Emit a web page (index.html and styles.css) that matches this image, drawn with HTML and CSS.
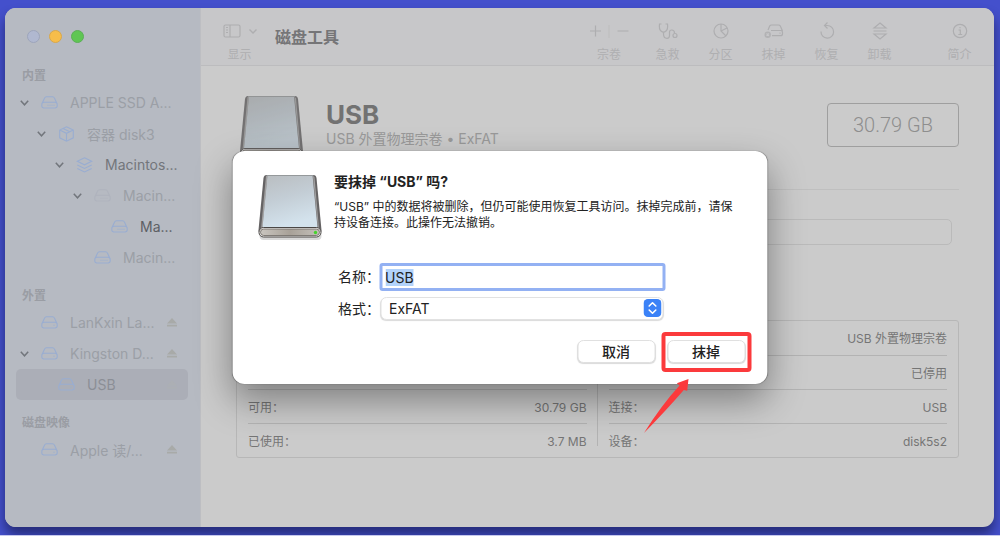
FILE: index.html
```
<!DOCTYPE html>
<html lang="zh-CN">
<head>
<meta charset="utf-8">
<meta name="viewport" content="width=device-width, initial-scale=1">
<title>磁盘工具</title>
<link rel="stylesheet" href="styles.css">
</head>
<body>
<svg class="defs" aria-hidden="true">
  <defs>
    <linearGradient id="metal" x1="0" y1="0" x2="0.3" y2="1">
      <stop offset="0" stop-color="#b9bdc0"/><stop offset="0.5" stop-color="#c3cdd5"/><stop offset="1" stop-color="#d3e2ec"/>
    </linearGradient>
    <linearGradient id="front" x1="0" y1="0" x2="1" y2="0">
      <stop offset="0" stop-color="#c9c5bf"/><stop offset="0.5" stop-color="#a8a198"/><stop offset="1" stop-color="#c4c0ba"/>
    </linearGradient>
    <symbol id="usb-drive" viewBox="0 0 66 68">
      <rect x="2" y="59" width="62" height="8" rx="4" fill="#000" opacity="0.15"/>
      <path d="M9 2H56Q58.500 2 59 5L64 57Q64 61 60 61H5Q1 61 1 57L6 5Q6.500 2 9 2Z" fill="#656364"/>
      <path d="M8.500 3L3.500 56H5L10 3Z" fill="#a09f9f"/>
      <path d="M55.500 3L60.500 56H61.500L57 4Z" fill="#a09f9f"/>
      <path d="M10 2H55L60 54.500H5Z" fill="url(#metal)"/>
      <path d="M9 2.500H56" stroke="#95999b" stroke-width="1"/>
      <rect x="1.500" y="54.500" width="62" height="9.500" rx="4.500" fill="#f2f1ef" stroke="#4a4745"/>
      <rect x="3" y="56" width="59" height="6.500" rx="3.200" fill="url(#front)" stroke="#6a655f" stroke-width="0.800"/>
      <circle cx="58" cy="59.500" r="1.700" fill="#45d42c"/>
    </symbol>
    <symbol id="disk" viewBox="0 0 17 13">
      <path d="M1 7.500L3.600 2Q4.100 0.800 5.400 0.800H11.600Q12.900 0.800 13.400 2L16 7.500M3 6.300H14Q16.200 6.300 16.200 8.500V9.800Q16.200 12 14 12H3Q0.800 12 0.800 9.800V8.500Q0.800 6.300 3 6.300Z"/>
      <path d="M12.500 9.200H13.500"/>
    </symbol>
    <symbol id="disk-internal" viewBox="0 0 17 13">
      <path d="M1 7.500L3.600 2Q4.100 0.800 5.400 0.800H11.600Q12.900 0.800 13.400 2L16 7.500M3 6.300H14Q16.200 6.300 16.200 8.500V9.800Q16.200 12 14 12H3Q0.800 12 0.800 9.800V8.500Q0.800 6.300 3 6.300Z"/>
      <path d="M6.500 9.200H14" stroke-dasharray="1 1"/>
    </symbol>
    <symbol id="box" viewBox="0 0 17 16">
      <path d="M8.500 0.800L15.300 4V11.800L8.500 15.200L1.700 11.800V4ZM1.700 4L8.500 7.300L15.300 4M8.500 7.300V15M5 2.500L11.800 5.700"/>
    </symbol>
    <symbol id="layers" viewBox="0 0 17 16">
      <path d="M8.500 0.800L15.700 4.300L8.500 7.800L1.300 4.300ZM1.300 8L8.500 11.500L15.700 8M1.300 11.500L8.500 15L15.700 11.500"/>
    </symbol>
    <symbol id="chevron" viewBox="0 0 9 6"><path d="M0.800 0.800L4.500 4.800L8.200 0.800"/></symbol>
    <symbol id="eject" viewBox="0 0 10 9"><path d="M5 0L10 5.500H0ZM0 6.800H10V8.600H0Z"/></symbol>
  </defs>
</svg>

<main class="window">
  <aside class="sidebar">
    <div class="lights">
      <button class="light" type="button" aria-label="关闭"></button>
      <button class="light light-amber" type="button" aria-label="最小化"></button>
      <button class="light light-green" type="button" aria-label="缩放"></button>
    </div>
    <nav>
      <h2 class="group">内置</h2>
      <ul class="tree">
        <li class="node"><svg class="chev"><use href="#chevron"/></svg><svg class="glyph"><use href="#disk-internal"/></svg><span>APPLE SSD A...</span></li>
        <li class="node level-1"><svg class="chev"><use href="#chevron"/></svg><svg class="glyph glyph-tall"><use href="#box"/></svg><span>容器 disk3</span></li>
        <li class="node level-2 strong"><svg class="chev"><use href="#chevron"/></svg><svg class="glyph glyph-tall"><use href="#layers"/></svg><span>Macintos...</span></li>
        <li class="node level-3"><svg class="chev"><use href="#chevron"/></svg><svg class="glyph glyph-faint"><use href="#disk-internal"/></svg><span>Macin...</span></li>
        <li class="node level-4 stronger"><span class="chev"></span><svg class="glyph"><use href="#disk-internal"/></svg><span>Ma...</span></li>
        <li class="node level-3"><span class="chev"></span><svg class="glyph"><use href="#disk-internal"/></svg><span>Macin...</span></li>
      </ul>
      <h2 class="group">外置</h2>
      <ul class="tree">
        <li class="node"><span class="chev"></span><svg class="glyph"><use href="#disk"/></svg><span>LanKxin La...</span><svg class="eject"><use href="#eject"/></svg></li>
        <li class="node"><svg class="chev"><use href="#chevron"/></svg><svg class="glyph"><use href="#disk"/></svg><span>Kingston D...</span><svg class="eject"><use href="#eject"/></svg></li>
        <li class="node level-1 selected"><span class="chev"></span><svg class="glyph"><use href="#disk"/></svg><span>USB</span><svg class="eject eject-faint"><use href="#eject"/></svg></li>
      </ul>
      <h2 class="group">磁盘映像</h2>
      <ul class="tree">
        <li class="node"><span class="chev"></span><svg class="glyph"><use href="#disk"/></svg><span>Apple 读/...</span><svg class="eject"><use href="#eject"/></svg></li>
      </ul>
    </nav>
  </aside>

  <section class="pane">
    <header class="toolbar">
      <button class="tool tool-view" type="button">
        <svg width="34" height="20" viewBox="0 0 34 20"><rect x="1" y="4" width="16" height="12" rx="1.500"/><path d="M7 4V16M3 6.500H5M3 9H5M3 11.500H5"/><path d="M26.500 8.500L30 12L33.500 8.500" stroke-width="1.400"/></svg>
        <span>显示</span>
      </button>
      <h1 class="title">磁盘工具</h1>
      <button class="tool tool-wide" type="button">
        <svg width="40" height="20" viewBox="0 0 40 20"><path d="M1 10H12M6.500 4.500V15.500M28.500 10H39.500"/><path d="M20 4V17" stroke-width="0.800" opacity="0.500"/></svg>
        <span>宗卷</span>
      </button>
      <button class="tool" type="button">
        <svg width="20" height="20" viewBox="0 0 20 20"><path d="M3.500 3H1.500Q0.800 8 3 10Q5.500 12.500 8 10Q10.200 8 9.500 3H7.500M5.500 11.500V13Q5.500 17.300 9 17.300Q11.500 17.300 11.500 14.500V11Q11.500 9 13.700 9Q16.500 9 16.500 12"/><circle cx="17" cy="14.500" r="2"/></svg>
        <span>急救</span>
      </button>
      <button class="tool" type="button">
        <svg width="20" height="20" viewBox="0 0 20 20"><circle cx="10" cy="10" r="7"/><path d="M10 3V10L15 15M10 10L16 7"/></svg>
        <span>分区</span>
      </button>
      <button class="tool" type="button">
        <svg width="20" height="20" viewBox="0 0 20 20"><path d="M4 9L5.700 5Q6.200 4 7.500 4H14.500Q15.800 4 16.300 5L18.500 10M7 9.500H16.500Q18.500 9.500 18.500 11.500V12.700Q18.500 14.700 16.500 14.700H8M15.500 12.200H16.500"/><circle cx="3.700" cy="13.700" r="3.200" fill="#b2b2b4" stroke="none"/><path d="M2.500 12.500L4.900 14.900M4.900 12.500L2.500 14.900" stroke="#c7c7c9"/></svg>
        <span>抹掉</span>
      </button>
      <button class="tool" type="button">
        <svg width="20" height="20" viewBox="0 0 20 20"><path d="M4 10.500A6.300 6.300 0 1 0 10.300 4.500H7.500M10.500 1.500L7.500 4.500L10.500 7.500"/></svg>
        <span>恢复</span>
      </button>
      <button class="tool" type="button">
        <svg width="20" height="20" viewBox="0 0 20 20"><path d="M10 2L16 7H4ZM3.500 10H16.500M4 13H16L10 18Z"/></svg>
        <span>卸载</span>
      </button>
      <button class="tool tool-info" type="button">
        <svg width="20" height="20" viewBox="0 0 20 20"><circle cx="10" cy="10" r="6.700"/><path d="M8.500 9H10.300V13.500M8.300 13.500H12.200M10 6V7.200"/></svg>
        <span>简介</span>
      </button>
    </header>

    <div class="content">
      <div class="summary">
        <svg class="drive drive-dim"><use href="#usb-drive"/></svg>
        <div class="names">
          <h2 class="volume">USB</h2>
          <p class="kind">USB 外置物理宗卷 • ExFAT</p>
        </div>
        <div class="capacity">30.79 GB</div>
      </div>
      <div class="usage"></div>
      <div class="facts">
        <table class="fact-table">
          <tr><th></th><td></td></tr>
          <tr><th></th><td></td></tr>
          <tr><th>可用：</th><td>30.79 GB</td></tr>
          <tr><th>已使用：</th><td>3.7 MB</td></tr>
        </table>
        <div class="rule"></div>
        <table class="fact-table">
          <tr><th></th><td>USB 外置物理宗卷</td></tr>
          <tr><th></th><td>已停用</td></tr>
          <tr><th>连接：</th><td>USB</td></tr>
          <tr><th>设备：</th><td>disk5s2</td></tr>
        </table>
      </div>
    </div>
  </section>

  <form class="dialog" role="dialog" aria-labelledby="dialog-title">
    <div class="message">
      <svg class="drive"><use href="#usb-drive"/></svg>
      <div class="words">
        <h2 class="question" id="dialog-title">要抹掉 “USB” 吗?</h2>
        <p class="detail">“USB” 中的数据将被删除，但仍可能使用恢复工具访问。抹掉完成前，请保持设备连接。此操作无法撤销。</p>
      </div>
    </div>
    <div class="fields">
      <label for="name">名称：</label>
      <input class="name" id="name" type="text" value="USB" autocomplete="off" spellcheck="false">
      <label for="format">格式：</label>
      <div class="picker">
        <select class="format" id="format"><option>ExFAT</option></select>
        <svg class="stepper" viewBox="0 0 18 18"><rect width="18" height="18" rx="4.500"/><path d="M5.700 7L9 3.800L12.300 7M5.700 11L9 14.200L12.300 11"/></svg>
      </div>
    </div>
    <div class="actions">
      <button class="action" type="button">取消</button>
      <div class="marked">
        <button class="action" type="button">抹掉</button>
        <svg class="arrow" viewBox="0 0 46 56"><path d="M45 1L33.300 5.300L36 7.500Q18 27 0.500 55Q23 32 40.300 12L43.700 12.800Z"/></svg>
      </div>
    </div>
  </form>
</main>
<script src="script.js"></script>
</body>
</html>
```
FILE: styles.css
```
* { box-sizing: border-box; }

body {
  margin: 0;
  min-height: 100vh;
  display: flex;
  padding: 8px 6px 8px 5px;
  border-bottom: 1px solid #c6c8ee;
  background: #4450cc;
  font-family: Inter, "Noto Sans CJK SC", sans-serif;
  font-size: 14px;
  overflow: hidden;
}

h1, h2, p, ul { margin: 0; padding: 0; }
button, input, select { font: inherit; color: inherit; }
.defs { position: absolute; width: 0; height: 0; }

.window {
  position: relative;
  flex: 1;
  display: flex;
  border-radius: 11px;
  background: #cbcbcb;
  box-shadow: 0 8px 12px rgba(0, 0, 20, 0.45);
}

/* Sidebar */
.sidebar {
  width: 196px;
  flex: none;
  padding-top: 22px;
  border-right: 1px solid #bdbec2;
  border-radius: 11px 0 0 11px;
  background: #b6bac2;
  color: #9b9fa6;
}

.lights { display: flex; gap: 9px; padding: 0 0 10px 22px; }
.light {
  width: 13px;
  height: 13px;
  padding: 0;
  border: 1px solid #9da5bb;
  border-radius: 50%;
  background: #b0b8d0;
}
.light-amber { background: #f7bd4a; border-color: #d8a84c; }
.light-green { background: #5fc653; border-color: #5cae58; }

.group {
  height: 21px;
  margin: 13px 0 0 17px;
  font-size: 12px;
  line-height: 20px;
  font-weight: 700;
  color: #9a9da4;
}
.tree { list-style: none; }
.node {
  display: flex;
  align-items: center;
  height: 31px;
  margin: 0 12px 0 11px;
  padding: 0 11px 0 4px;
  border-radius: 5px;
  white-space: nowrap;
}
.level-1 { padding-left: 21px; }
.level-2 { padding-left: 39px; }
.level-3 { padding-left: 57px; }
.level-4 { padding-left: 74px; }
.node span:not(.chev) { margin-right: -12px; }
.strong { color: #73767b; }
.stronger { color: #5d6065; }
.selected { background: #abaeb7; color: #8b8e96; }
.chev { width: 9px; height: 6px; margin-right: 13px; flex: none; fill: none; stroke: #72767c; stroke-width: 1.5; }
.glyph { width: 17px; height: 13px; margin: 0 12px 0 -1px; flex: none; fill: none; stroke: #99add1; stroke-width: 1.1; }
.glyph-tall { height: 16px; }
.glyph-faint { stroke: #afb3bd; }
.eject { width: 10px; height: 9px; margin-left: auto; flex: none; fill: #a8aaa8; }
.eject-faint { fill: #acafb4; }

/* Toolbar */
.pane { flex: 1; min-width: 0; }
.toolbar {
  display: flex;
  height: 58px;
  padding: 13px 8px 0 12px;
  border-bottom: 1px solid #bcbcbe;
  border-radius: 0 11px 0 0;
  background: #c7c7c9;
}
.tool {
  width: 53px;
  display: flex;
  flex-direction: column;
  align-items: center;
  gap: 6px;
  padding: 0;
  border: 0;
  background: none;
  color: #afafb1;
  font-size: 12px;
  line-height: 16px;
}
.tool svg { fill: none; stroke: #aeaeb0; stroke-width: 1.2; }
.tool-wide { width: 64px; }
.tool-info { margin-left: 27px; }
.title {
  margin: 4px auto 0 9px;
  font-size: 16px;
  line-height: 24px;
  font-weight: 700;
  color: #757577;
}

/* Volume details */
.content { padding: 28px 35px 20px; }
.summary {
  display: flex;
  align-items: flex-start;
  padding: 0 0 27px 3px;
  border-bottom: 1px solid #bfbfbf;
}
.drive { width: 66px; height: 68px; flex: none; }
.drive-dim { opacity: 0.75; filter: brightness(0.85); }
.names { margin: 5px auto 0 21px; }
.volume { font-size: 26px; line-height: 31px; font-weight: 700; color: #727272; }
.kind { font-size: 14px; line-height: 18px; color: #999; }
.capacity {
  width: 132px;
  margin-top: 9px;
  border: 1px solid #9f9f9f;
  border-radius: 4px;
  font-family: Roboto, sans-serif;
  font-size: 20px;
  line-height: 42px;
  font-weight: 300;
  text-align: center;
  color: #8e8e8e;
}
.usage {
  height: 26px;
  margin: 29px 7px 75px;
  border: 1px solid #bababa;
  border-radius: 5px;
}
.facts { display: flex; padding: 0 11px; border: 1px solid #b7b7b7; border-radius: 3px; }
.fact-table { flex: 1; border-collapse: collapse; font-size: 12px; line-height: 16px; color: #757575; }
.fact-table tr { height: 34px; }
.fact-table tr + tr { border-top: 1px solid #b3b3b3; }
.fact-table th { padding: 3px 0 0; font-weight: 400; text-align: left; }
.fact-table td { padding: 3px 0 0; text-align: right; }
.rule { width: 1px; margin: 11px 11px 11px 10px; background: #b3b3b3; }

/* Confirmation sheet over the window */
.dialog {
  position: absolute;
  top: 143px;
  left: 50%;
  width: 535px;
  transform: translateX(-50%);
  padding: 22px 22px 21px 25px;
  border-radius: 12px;
  background: #fff;
  color: #222;
  box-shadow: 0 0 1px rgba(0, 0, 0, 0.5), 0 16px 36px rgba(0, 0, 0, 0.38);
}
.message { display: flex; gap: 11px; }
.question { font-size: 14px; line-height: 18px; font-weight: 700; }
.words { max-width: 408px; }
.detail { margin-top: 8px; font-size: 12px; line-height: 16px; }
.fields {
  display: grid;
  grid-template-columns: 41px 1fr;
  align-items: center;
  row-gap: 6px;
  margin: 22px 80px 20px 81px;
  line-height: 20px;
  white-space: nowrap;
}
.name {
  width: 100%;
  height: 28px;
  padding: 0 3px;
  border: 3px solid #93b1f3;
  border-radius: 3px;
  outline: 0;
  background: #fff;
}
.name::selection { background: #b3d3fb; color: #222; }
.picker { position: relative; margin: 0 2px 0 1px; }
.format {
  display: block;
  width: 100%;
  height: 23px;
  padding: 0 8px;
  appearance: none;
  border: 1px solid #e2e2e2;
  border-radius: 6px;
  background: #fff;
  box-shadow: 0 1px 1px rgba(0, 0, 0, 0.15);
}
.stepper { position: absolute; top: 2px; right: 2px; width: 18px; height: 18px; pointer-events: none; fill: #3b82f7; }
.stepper path { fill: none; stroke: #fff; stroke-width: 1.6; stroke-linecap: round; stroke-linejoin: round; }
.actions { display: flex; justify-content: flex-end; gap: 12px; }
.action {
  display: block;
  width: 78px;
  height: 23px;
  padding: 0;
  border: 1px solid #e0e0e0;
  border-radius: 6px;
  background: #fff;
  box-shadow: 0 1px 1px rgba(0, 0, 0, 0.15);
  line-height: 20px;
  font-weight: 500;
}
.marked { position: relative; }
.marked::before {
  content: "";
  position: absolute;
  inset: -8px -6px -9px -6px;
  border: 4px solid #fb3a3c;
  border-radius: 4px;
  pointer-events: none;
}
.arrow { position: absolute; top: 38px; left: -24px; width: 46px; height: 56px; fill: #fb3a3c; }
```
FILE: script.js
```
const nameField = document.getElementById("name");
nameField.focus();
nameField.select();
```
